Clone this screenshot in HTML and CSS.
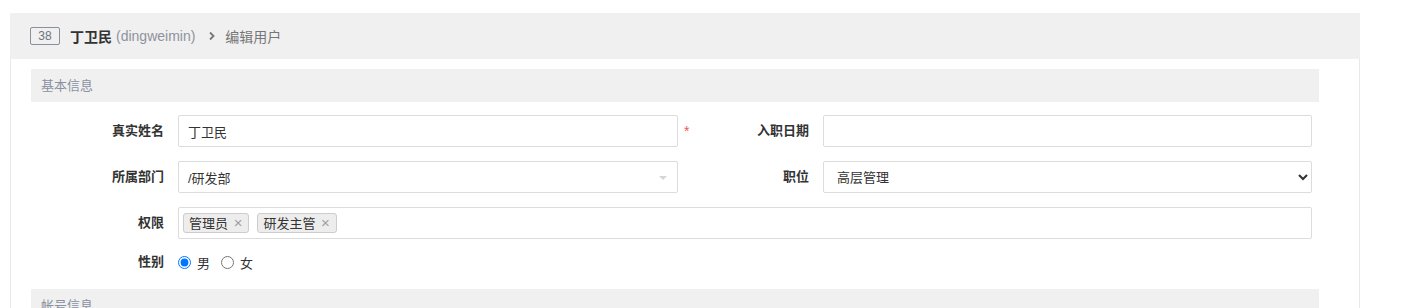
FILE: index.html
```html
<!DOCTYPE html>
<html lang="zh-CN">
<head>
	<meta charset="UTF-8">
	<title>编辑用户</title>
	<link rel="stylesheet" href="styles.css">
</head>
<body>
	<div class="page">
		<div class="panel">
			<div class="panel-head">
				<span class="badge">38</span>
				<strong class="uname">丁卫民</strong>
				<span class="account">(dingweimin)</span>
				<svg class="crumb" width="8" height="10" viewBox="0 0 8 10"><path d="M2 1.5 L5.5 5 L2 8.5" fill="none" stroke="#777" stroke-width="1.8"/></svg>
				<span class="crumb-text">编辑用户</span>
			</div>

			<div class="panel-body">
				<div class="section-title">基本信息</div>

				<div class="form">
					<label class="label">真实姓名</label>
					<div class="field">
						<input class="control w500" type="text" value="丁卫民">
						<span class="req">*</span>
					</div>
					<label class="label">入职日期</label>
					<div class="field">
						<input class="control w488" type="text" value="">
					</div>

					<label class="label">所属部门</label>
					<div class="field">
						<div class="control w500 chosen">
							<span>/研发部</span>
							<i class="caret"></i>
						</div>
					</div>
					<label class="label">职位</label>
					<div class="field">
						<select class="control w488 select">
							<option>高层管理</option>
						</select>
					</div>

					<label class="label">权限</label>
					<div class="field wide">
						<div class="control tags">
							<span class="tag">管理员 <b>×</b></span>
							<span class="tag">研发主管 <b>×</b></span>
						</div>
					</div>

					<label class="label short">性别</label>
					<div class="field short radios">
						<label class="radio"><input type="radio" name="sex" checked> 男</label>
						<label class="radio"><input type="radio" name="sex"> 女</label>
					</div>
				</div>

				<div class="section-title second">帐号信息</div>
			</div>
		</div>
	</div>
</body>
</html>
```

FILE: styles.css
```css
*{
	margin:0;
	padding:0;
	box-sizing:border-box;
}
body{
	background:#fff;
	font-family:"Liberation Sans","Noto Sans CJK SC",sans-serif;
	font-size:13px;
	color:#333;
}
.page{
	padding:13px 0 0 10px;
}
.panel{
	width:1350px;
	border-left:1px solid #e8e8e8;
	border-right:1px solid #e8e8e8;
	height:295px;
}
.panel-head{
	height:46px;
	background:#f0f0f0;
	display:flex;
	align-items:center;
	padding-left:20px;
	margin-left:-1px;
	margin-right:-1px;
}
.badge{
	display:inline-block;
	width:30px;
	height:18px;
	line-height:16px;
	border:1px solid #8a8f99;
	border-radius:2px;
	text-align:center;
	font-size:12px;
	color:#6d7380;
}
.uname{
	font-size:14px;
	margin-left:10px;
	color:#333;
}
.account{
	font-size:14px;
	color:#8e939d;
	margin-left:4px;
}
.crumb{
	margin-left:13px;
	margin-right:9px;
}
.crumb-text{
	font-size:14px;
	color:#777;
}
.panel-body{
	padding:10px 40px 0 20px;
}
.section-title{
	height:33px;
	line-height:33px;
	background:#f0f0f0;
	padding-left:10px;
	color:#8b91a1;
	font-size:13px;
}
.section-title.second{
	margin-top:18px;
}
.form{
	display:grid;
	grid-template-columns:133px 500px 117px 489px;
	column-gap:14px;
	row-gap:14px;
	margin-top:13px;
}
.label{
	text-align:right;
	font-weight:bold;
	line-height:32px;
	color:#333;
}
.label.short{
	line-height:18px;
}
.field{
	display:flex;
	align-items:center;
	height:32px;
}
.field.short{
	height:18px;
}
.field.wide{
	grid-column:2 / -1;
}
.control{
	height:32px;
	border:1px solid #dcdcdc;
	border-radius:2px;
	background:#fff;
	padding:0 9px;
	font-family:inherit;
	font-size:13px;
	color:#333;
	outline:none;
	flex:none;
}
.w500{
	width:500px;
}
.w488{
	width:489px;
}
.req{
	color:#f2555a;
	margin-left:6px;
	font-size:14px;
	flex:none;
}
.chosen{
	display:flex;
	align-items:center;
	justify-content:space-between;
	padding-right:10px;
}
.caret{
	width:0;
	height:0;
	border-left:4px solid transparent;
	border-right:4px solid transparent;
	border-top:4px solid #d6d6d6;
	margin-top:2px;
}
.select{
	padding-left:9px;
}
.tags{
	width:100%;
	display:flex;
	align-items:center;
	gap:8px;
	padding-left:4px;
}
.tag{
	display:inline-block;
	height:20px;
	line-height:18px;
	padding:0 6px 0 5px;
	border:1px solid #cdcdcd;
	border-radius:3px;
	background:#ededed;
	color:#333;
}
.tag b{
	font-weight:normal;
	font-size:15px;
	color:#a0a0a0;
	margin-left:2px;
}
.radios{
	gap:0;
}
.radio{
	display:flex;
	align-items:center;
	margin-right:11px;
}
.radio input{
	width:13px;
	height:13px;
	margin:0 6px 0 0;
}
```
